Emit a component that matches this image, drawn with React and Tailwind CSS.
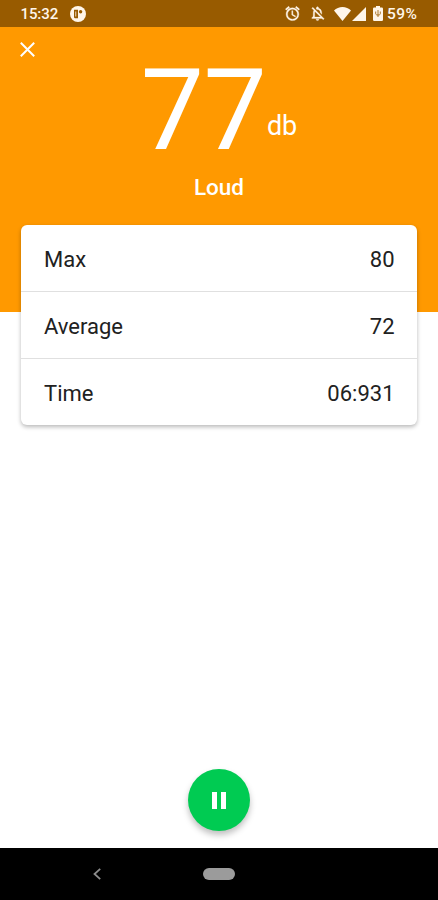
import React from 'react';

const READINGS = [
    { label: 'Max', value: '80' },
    { label: 'Average', value: '72' },
    { label: 'Time', value: '06:931' },
];

function AlarmIcon() {
    return (
        <svg className="w-[17px] h-[17px]" viewBox="0 0 24 24" fill="currentColor" stroke="currentColor" strokeWidth=".5">
            <path d="M22 5.72l-4.6-3.86-1.29 1.53 4.6 3.86L22 5.72zM7.88 3.39L6.6 1.86 2 5.71l1.29 1.53 4.59-3.85zM12.5 8H11v6l4.75 2.85.75-1.23-4-2.37V8zM12 4c-4.97 0-9 4.03-9 9s4.02 9 9 9a9 9 0 0 0 0-18zm0 16c-3.87 0-7-3.13-7-7s3.13-7 7-7 7 3.13 7 7-3.13 7-7 7z" />
        </svg>
    );
}

function BellOffIcon() {
    return (
        <svg className="w-[17px] h-[17px]" viewBox="0 0 24 24" fill="currentColor" stroke="currentColor" strokeWidth=".4">
            <path d="M12 22c1.1 0 2-.9 2-2h-4c0 1.1.9 2 2 2zm0-15.5c2.49 0 4 2.02 4 4.5v.1l2 2V11c0-3.07-1.63-5.64-4.5-6.32V4c0-.83-.67-1.5-1.5-1.5s-1.5.67-1.5 1.5v.68c-.24.06-.47.15-.69.23l1.64 1.64c.18-.02.36-.05.55-.05zM5.41 3.35L4 4.76l2.81 2.81C6.29 8.57 6 9.74 6 11v5l-2 2v1h14.24l1.74 1.74 1.41-1.41L5.41 3.35zM16 17H8v-6c0-.68.12-1.32.34-1.9L16 16.76V17z" />
        </svg>
    );
}

function BatteryIcon() {
    return (
        <svg className="w-[10px] h-[15px]" viewBox="0 0 10 15">
            <path fill="currentColor" d="M3 0h4v1.6h1.8A1.2 1.2 0 0 1 10 2.8v11A1.2 1.2 0 0 1 8.8 15H1.2A1.2 1.2 0 0 1 0 13.8v-11a1.2 1.2 0 0 1 1.2-1.2H3z" />
            <path fill="none" stroke="#985b00" strokeWidth=".8" d="M2.7 5.5v2.2c0 1 1 1.3 2.3 1.3s2.3-.3 2.3-1.3V5.5M5 4v7" />
        </svg>
    );
}

function StatusBar() {
    return (
        <div className="h-[27px] bg-[#985b00] flex items-center pl-[20.5px] pr-[19px] pt-[2px] text-[#fff6ea]">
            <span className="w-[37.5px] text-[15px] leading-none font-medium tracking-[-0.1px]">15:32</span>
            <svg className="w-4 h-4 ml-3 -mt-[2px]" viewBox="0 0 16 16">
                <circle cx="8" cy="8" r="8" fill="currentColor" />
                <path fill="#985b00" d="M4 3.8h4v8.4H5.2A1.2 1.2 0 0 1 4 11z" />
                <path fill="currentColor" d="M5.4 5.5h.8v5h-.8z" />
                <circle cx="10.6" cy="5.8" r="1.7" fill="#985b00" />
            </svg>
            <div className="ml-auto flex items-center -mt-[2px]">
                <AlarmIcon />
                <span className="ml-2 mr-[8px]"><BellOffIcon /></span>
                <svg className="w-[17px] h-[14px]" viewBox="0 0 17 13" preserveAspectRatio="none" fill="currentColor">
                    <path d="M0 3.2C2.3 1.2 5.2 0 8.5 0S14.7 1.2 17 3.2L8.5 13z" />
                </svg>
                <svg className="w-[14px] h-[14px] ml-px mr-[7px]" viewBox="0 0 14 14" fill="currentColor">
                    <path d="M14 0v14H0z" />
                </svg>
                <BatteryIcon />
                <span className="ml-[4px] w-[32px] mt-[2px] text-[15.5px] leading-none font-medium tracking-[0.4px]">59%</span>
            </div>
        </div>
    );
}

function App() {
    return (
        <div className="h-[900px] w-full flex flex-col bg-white overflow-hidden font-[Roboto,sans-serif]">
            <StatusBar />

            {/* Current level */}
            <div className="h-[285px] shrink-0 bg-[#ff9900] text-white flex flex-col">
                <button className="mt-[15px] ml-[20px] w-[15px] h-[15px]" aria-label="Close">
                    <svg viewBox="0 0 15 15" className="w-full h-full" fill="none" stroke="currentColor" strokeWidth="2">
                        <path d="M.8.8l13.4 13.4M14.2.8L.8 14.2" />
                    </svg>
                </button>
                <div className="mt-[14px] flex justify-center items-start">
                    <span className="text-[112.5px] leading-[80px] tracking-[-0.4px]">77</span>
                    <span className="mt-[41px] ml-[0.5px] text-[27px] leading-[28px]">db</span>
                </div>
                <div className="mt-[22px] text-center text-[22.5px] leading-[28px] font-medium">Loud</div>
            </div>

            {/* Readings */}
            <div className="-mt-[87px] mx-[21px] h-[200px] shrink-0 flex flex-col bg-white rounded-md shadow-[0_2px_4px_rgba(0,0,0,0.28)] divide-y divide-[#e0e0e0]">
                {READINGS.map(r => (
                    <div key={r.label} className="flex-1 flex items-center justify-between pl-[23px] pr-[22.5px] pt-[3px] text-[22px] leading-none text-[#212121]">
                        <span>{r.label}</span>
                        <span>{r.value}</span>
                    </div>
                ))}
            </div>

            <div className="flex-1 flex items-end justify-center pb-[17px]">
                <button className="w-[62px] h-[62px] rounded-full bg-[#00cb52] flex items-center justify-center gap-1 shadow-[0_4px_6px_rgba(0,0,0,0.25)]" aria-label="Pause">
                    <span className="w-[5px] h-[17px] bg-white" />
                    <span className="w-[5px] h-[17px] bg-white" />
                </button>
            </div>

            {/* System navigation */}
            <div className="h-[52px] shrink-0 bg-black flex items-center pl-[93px]">
                <svg className="w-[8px] h-[12px]" viewBox="0 0 8 12" fill="none" stroke="#8c8c8c" strokeWidth="1.8">
                    <path d="M7.2.8L1.5 6l5.7 5.2" />
                </svg>
                <span className="ml-[102px] w-[32px] h-[12px] rounded-full bg-[#9b9b9b]" />
            </div>
        </div>
    );
}

export default App;
